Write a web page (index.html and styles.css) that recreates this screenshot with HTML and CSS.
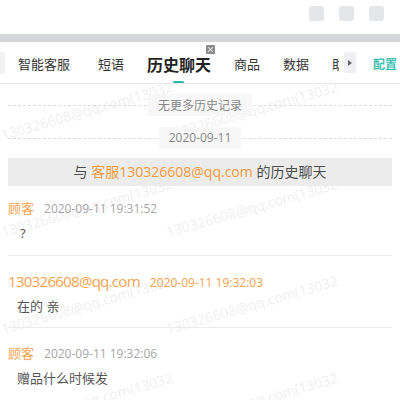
FILE: index.html
```
<!DOCTYPE html>
<html lang="zh">
<head>
<meta charset="utf-8">
<link rel="stylesheet" href="styles.css">
</head>
<body>
<div class="app">
  <div class="topbar">
    <span class="win-btn"></span>
    <span class="win-btn"></span>
    <span class="win-btn"></span>
  </div>
  <div class="band"></div>
  <div class="tabbar">
    <span class="scroll-left"></span>
    <div class="tabs">
      <span class="tab">智能客服</span>
      <span class="tab">短语</span>
      <span class="tab active">历史聊天<i class="tab-close"></i><i class="tab-line"></i></span>
      <span class="tab">商品</span>
      <span class="tab">数据</span>
      <span class="tab">助手</span>
    </div>
    <span class="scroll-right"><i class="tri"></i></span>
    <span class="config">配置</span>
  </div>
  <div class="chat">
    <div class="watermarks">
      <span class="wm" style="left:-2px;top:100px">130326608@qq.com(13032</span>
      <span class="wm" style="left:163px;top:100px">130326608@qq.com(13032</span>
      <span class="wm" style="left:-2px;top:197px">130326608@qq.com(13032</span>
      <span class="wm" style="left:163px;top:197px">130326608@qq.com(13032</span>
      <span class="wm" style="left:-2px;top:294px">130326608@qq.com(13032</span>
      <span class="wm" style="left:163px;top:294px">130326608@qq.com(13032</span>
      <span class="wm" style="left:-2px;top:391px">130326608@qq.com(13032</span>
      <span class="wm" style="left:163px;top:391px">130326608@qq.com(13032</span>
    </div>
    <div class="sep first"><span class="sep-label">无更多历史记录</span></div>
    <div class="sep"><span class="sep-label date">2020-09-11</span></div>
    <div class="banner">与 <span class="hl">客服130326608@qq.com</span> 的历史聊天</div>
    <div class="msg first-msg">
      <div class="msg-head"><span class="name">顾客</span><span class="time">2020-09-11 19:31:52</span></div>
      <div class="msg-body q">?</div>
    </div>
    <div class="msg agent-msg">
      <div class="msg-head"><span class="name agent">130326608@qq.com</span><span class="time agent-time">2020-09-11 19:32:03</span></div>
      <div class="msg-body">在的 亲</div>
    </div>
    <div class="msg last">
      <div class="msg-head"><span class="name">顾客</span><span class="time">2020-09-11 19:32:06</span></div>
      <div class="msg-body">赠品什么时候发</div>
    </div>
  </div>
</div>
</body>
</html>
```

FILE: styles.css
```
* { box-sizing: border-box; }
html, body { margin: 0; padding: 0; background: #fff; }
body {
  width: 400px;
  height: 400px;
  overflow: hidden;
  font-family: "Open Sans", "Noto Sans CJK SC", sans-serif;
  color: #555;
}
.app { width: 400px; height: 400px; overflow: hidden; }

.topbar {
  height: 34px;
  display: flex;
  justify-content: flex-end;
  align-items: flex-start;
  gap: 15px;
  padding: 6px 16px 0 0;
}
.win-btn {
  width: 15px;
  height: 15px;
  border-radius: 3px;
  background: #e5e6ea;
}
.band { height: 8px; background: #d6d7db; }

.tabbar {
  height: 42px;
  display: flex;
  align-items: center;
  border-bottom: 1px solid #e8e8e8;
}
.scroll-left {
  width: 5px;
  height: 22px;
  background: #f1f1f1;
  border-radius: 0 2px 2px 0;
  flex: none;
}
.tabs {
  display: flex;
  align-items: center;
  width: 334px;
  height: 100%;
  overflow: hidden;
  flex: none;
  padding-left: 13px;
  gap: 23px;
}
.tab {
  position: relative;
  flex: none;
  font-family: "Noto Sans CJK SC", sans-serif;
  font-size: 13px;
  color: #333;
  line-height: 18px;
  margin-top: 2px;
}
.tab:first-child { margin-right: 5px; }
.tab.active {
  font-size: 16px;
  font-weight: 700;
  color: #222;
}
.tab-close {
  position: absolute;
  right: -4px;
  top: -10px;
  width: 9px;
  height: 9px;
  border-radius: 1px;
  background: #8a8a8a;
}
.tab-close::before, .tab-close::after {
  content: "";
  position: absolute;
  left: 1px;
  top: 4px;
  width: 7px;
  height: 1px;
  background: #e0e0e0;
  transform: rotate(45deg);
}
.tab-close::after { transform: rotate(-45deg); }
.tab-line {
  position: absolute;
  left: 26px;
  top: 26px;
  width: 11px;
  height: 3px;
  border-radius: 2px;
  background: #25b7a8;
}
.scroll-right {
  flex: none;
  margin-left: 5px;
  width: 12px;
  height: 21px;
  background: #f0f0f2;
  border-radius: 2px;
  display: flex;
  align-items: center;
  justify-content: center;
}
.tri {
  width: 0;
  height: 0;
  border-left: 4px solid #666;
  border-top: 3px solid transparent;
  border-bottom: 3px solid transparent;
}
.config {
  margin-left: 17px;
  font-family: "Noto Sans CJK SC", sans-serif;
  font-size: 12px;
  font-weight: 700;
  color: #3cc1b1;
  margin-top: 2px;
}

.chat {
  position: relative;
  padding: 0 8px;
  height: 317px;
  overflow: hidden;
}
.watermarks {
  position: absolute;
  left: 0;
  top: -83px;
  width: 400px;
  height: 400px;
  z-index: 0;
  pointer-events: none;
}
.wm {
  position: absolute;
  font-family: "Open Sans", sans-serif;
  font-size: 14px;
  color: #efefef;
  white-space: nowrap;
  transform: rotate(-16deg);
  transform-origin: center;
}
.sep, .banner, .msg { position: relative; z-index: 1; }

.sep {
  height: 22px;
  display: flex;
  justify-content: center;
  align-items: center;
  margin-top: 11px;
}
.sep::before {
  content: "";
  position: absolute;
  left: 0;
  right: 0;
  top: 11px;
  border-top: 1px dashed #dcdcdc;
}
.sep-label {
  position: relative;
  background: #f7f7f7;
  font-family: "Noto Sans CJK SC", sans-serif;
  font-size: 12px;
  color: #888;
  line-height: 22px;
  padding: 0 10px;
}
.sep-label.date {
  font-family: "Open Sans", sans-serif;
  padding: 0 10px;
}
.first { margin-top: 10px; }

.banner {
  margin-top: 9px;
  height: 28px;
  background: #ececec;
  text-align: center;
  line-height: 28px;
  font-size: 14px;
  color: #4d4d4d;
}
.hl { color: #f39a3c; }

.msg {
  border-bottom: 1px solid #ebebeb;
  padding: 15px 0 14px;
}
.msg.first-msg { padding-top: 12px; padding-bottom: 13px; }
.msg.agent-msg { padding-bottom: 12px; }
.msg.last { border-bottom: none; }
.msg-head {
  display: flex;
  align-items: baseline;
  height: 18px;
}
.name {
  font-family: "Noto Sans CJK SC", sans-serif;
  font-size: 13px;
  color: #f7a24d;
  margin-right: 10px;
}
.name.agent {
  font-family: "Open Sans", sans-serif;
  font-size: 15px;
  letter-spacing: -0.7px;
}
.time {
  font-size: 12px;
  color: #a6a6a6;
}
.time.agent-time { color: #f7a24d; }
.msg-body {
  margin-top: 8px;
  padding-left: 9px;
  font-size: 13px;
  color: #555;
  line-height: 18px;
}
.msg-body.q { padding-left: 12px; }
```
